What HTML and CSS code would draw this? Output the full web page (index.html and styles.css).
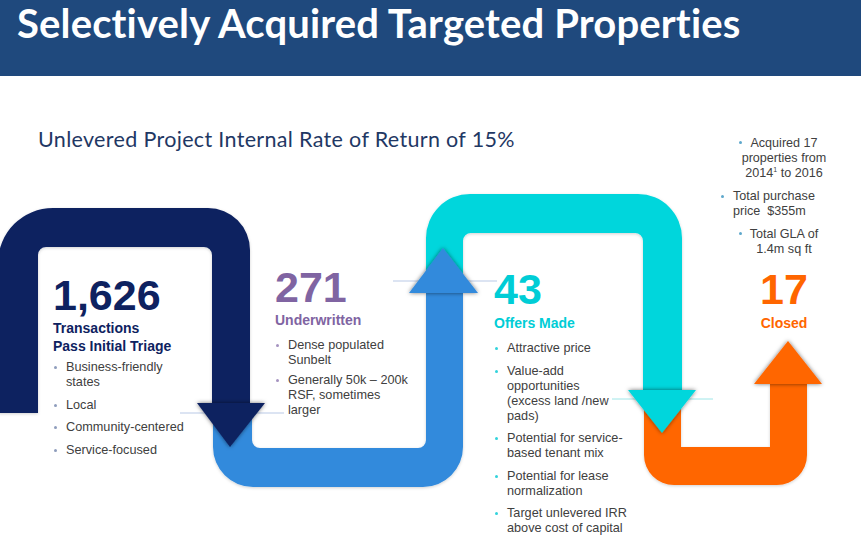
FILE: index.html
```html
<!DOCTYPE html>
<html lang="en">
<head>
<meta charset="utf-8">
<title>Selectively Acquired Targeted Properties</title>
<link rel="stylesheet" href="styles.css">
</head>
<body>
<header class="banner">
  <h1 class="banner-title">Selectively Acquired Targeted Properties</h1>
</header>
<main class="stage">
  <h2 class="subtitle">Unlevered Project Internal Rate of Return of 15%</h2>

  <svg class="flow" width="861" height="469" viewBox="0 76 861 469" aria-hidden="true">
    <defs>
      <filter id="headShadow" x="-30%" y="-30%" width="160%" height="160%">
        <feDropShadow dx="0" dy="0" stdDeviation="2.2" flood-color="#000" flood-opacity="0.55"/>
      </filter>
      <filter id="bodyShadow" x="-10%" y="-10%" width="120%" height="120%">
        <feDropShadow dx="0" dy="1" stdDeviation="1.5" flood-color="#000" flood-opacity="0.18"/>
      </filter>
    </defs>
    <!-- connector lines -->
    <line x1="180" y1="413" x2="284" y2="413" stroke="#b9c9e6" stroke-width="1"/>
    <line x1="393" y1="281" x2="497" y2="281" stroke="#b9c9e6" stroke-width="1"/>
    <line x1="612" y1="399" x2="713" y2="399" stroke="#9fe6e8" stroke-width="1"/>

    <!-- orange U -->
    <path filter="url(#bodyShadow)" fill="#ff6600" d="M644 395 V455 A30 30 0 0 0 674 485 H777 A30 30 0 0 0 807 455 V384 H770 V447 H681 V395 Z"/>
    <polygon filter="url(#headShadow)" fill="#ff6600" points="754,384 822,384 788,341"/>

    <!-- teal inverted U -->
    <path filter="url(#bodyShadow)" fill="#00d6dc" d="M426 285 V238 A44 44 0 0 1 470 194 H638 A44 44 0 0 1 682 238 V390 H643 V241 A8 8 0 0 0 635 233 H471 A8 8 0 0 0 463 241 V285 Z"/>
    <polygon filter="url(#headShadow)" fill="#00d6dc" points="628,390 696,390 662,433"/>

    <!-- blue U -->
    <path filter="url(#bodyShadow)" fill="#338adc" d="M213 415 V447 A40 40 0 0 0 253 487 H423 A40 40 0 0 0 463 447 V293 H426 V440 A8 8 0 0 1 418 448 H260 A8 8 0 0 1 252 440 V415 Z"/>
    <polygon filter="url(#headShadow)" fill="#338adc" points="409,293 478,293 443,248"/>

    <!-- navy inverted U -->
    <path filter="url(#bodyShadow)" fill="#0e2260" d="M-2 413 V263 A55 55 0 0 1 53 208 H208 A42 42 0 0 1 250 250 V403 H212 V255 A8 8 0 0 0 204 247 H46 A8 8 0 0 0 38 255 V413 Z"/>
    <polygon filter="url(#headShadow)" fill="#0e2260" points="197,403 265,403 230,447"/>
  </svg>

  <section class="node node-triage">
    <div class="node-figure">1,626</div>
    <h3 class="node-label">Transactions<br>Pass Initial Triage</h3>
    <ul class="points">
      <li>Business-friendly states</li>
      <li>Local</li>
      <li>Community-centered</li>
      <li>Service-focused</li>
    </ul>
  </section>

  <section class="node node-under">
    <div class="node-figure">271</div>
    <h3 class="node-label">Underwritten</h3>
    <ul class="points">
      <li>Dense populated Sunbelt</li>
      <li>Generally 50k – 200k RSF, sometimes larger</li>
    </ul>
  </section>

  <section class="node node-offers">
    <div class="node-figure">43</div>
    <h3 class="node-label">Offers Made</h3>
    <ul class="points">
      <li>Attractive price</li>
      <li>Value-add opportunities<br>(excess land /new pads)</li>
      <li>Potential for service-based tenant mix</li>
      <li>Potential for lease normalization</li>
      <li>Target unlevered IRR above cost of capital</li>
    </ul>
  </section>

  <section class="node node-closed">
    <div class="node-figure">17</div>
    <h3 class="node-label">Closed</h3>
  </section>

  <ul class="summary">
    <li class="summary-item summary-center"><span class="lead">Acquired 17</span><br>properties from<br>2014<sup>1</sup> to 2016</li>
    <li class="summary-item summary-hang">Total purchase<br>price&nbsp; $355m</li>
    <li class="summary-item summary-center"><span class="lead">Total GLA of</span><br>1.4m sq ft</li>
  </ul>
</main>
</body>
</html>
```

FILE: styles.css
```css
html, body {
  margin: 0;
  padding: 0;
}
body {
  width: 861px;
  height: 545px;
  overflow: hidden;
  background: #ffffff;
  font-family: "Liberation Sans", Arial, sans-serif;
}

.banner {
  height: 76px;
  background: #1f497d;
  padding-left: 17px;
  box-sizing: border-box;
}
.banner-title {
  margin: 0;
  font-family: Lato, "Open Sans", sans-serif;
  font-weight: 700;
  font-size: 40px;
  letter-spacing: 0.15px;
  line-height: 47px;
  color: #ffffff;
  white-space: nowrap;
}

.stage {
  position: relative;
  height: 469px;
}
.subtitle {
  margin: 0;
  padding: 51px 0 0 38px;
  font-family: Lato, "Open Sans", sans-serif;
  font-weight: 400;
  font-size: 21.5px;
  letter-spacing: 0.33px;
  line-height: 24px;
  color: #1f3864;
  white-space: nowrap;
}

.flow {
  position: absolute;
  left: 0;
  top: 0;
}

.node {
  position: absolute;
  color: #404040;
}
.node-figure {
  font-weight: 700;
  font-size: 43px;
  line-height: 42px;
}
.node-label {
  margin: 3px 0 0;
  font-size: 14px;
  line-height: 18px;
  font-weight: 700;
}
.points {
  list-style: none;
  margin: 0;
  padding: 0;
  display: flex;
  flex-direction: column;
  gap: 7.5px;
  font-size: 12.7px;
  line-height: 15px;
  color: #404040;
}
.points li {
  position: relative;
  padding-left: 13px;
}
.points li::before {
  content: "";
  position: absolute;
  left: 1px;
  top: 6px;
  width: 3px;
  height: 3px;
  border-radius: 50%;
  background: var(--dot, #8ea0bf);
}

.node-triage {
  left: 53px;
  top: 198px;
  width: 150px;
  color: #0e2260;
  --dot: #8e9dbc;
}
.node-triage .points { margin-top: 5px; }
.node-triage .points li { width: 122px; }

.node-under {
  left: 275px;
  top: 190px;
  width: 150px;
  color: #8064a2;
  --dot: #a593c0;
}
.node-under .points { margin-top: 9px; gap: 5px; }
.node-under .points li { width: 122px; }

.node-offers {
  left: 494px;
  top: 192px;
  width: 150px;
  color: #00cdd6;
  --dot: #33d3dc;
}
.node-offers .node-label { margin-top: 4px; }
.node-offers .points { margin-top: 9px; }
.node-offers .points li { width: 121px; }

.node-closed {
  left: 744px;
  top: 192px;
  width: 80px;
  text-align: center;
  color: #ff6600;
}
.node-closed .node-label { margin-top: 4px; }

.summary {
  position: absolute;
  left: 722px;
  top: 60px;
  width: 124px;
  margin: 0;
  padding: 0;
  list-style: none;
  display: flex;
  flex-direction: column;
  gap: 8px;
  font-size: 12.6px;
  line-height: 15px;
  color: #404040;
}
.summary-item {
  position: relative;
}
.summary-center {
  text-align: center;
}
.summary-hang {
  padding-left: 11px;
}
.summary-hang::before,
.lead::before {
  content: "";
  position: absolute;
  top: 6px;
  width: 3px;
  height: 3px;
  border-radius: 50%;
  background: #5ea8cc;
}
.summary-hang::before {
  left: -1px;
}
.lead {
  position: relative;
}
.lead::before {
  left: -11px;
  top: 5px;
}
.summary sup {
  font-size: 7px;
  line-height: 0;
  vertical-align: 5px;
}
```
